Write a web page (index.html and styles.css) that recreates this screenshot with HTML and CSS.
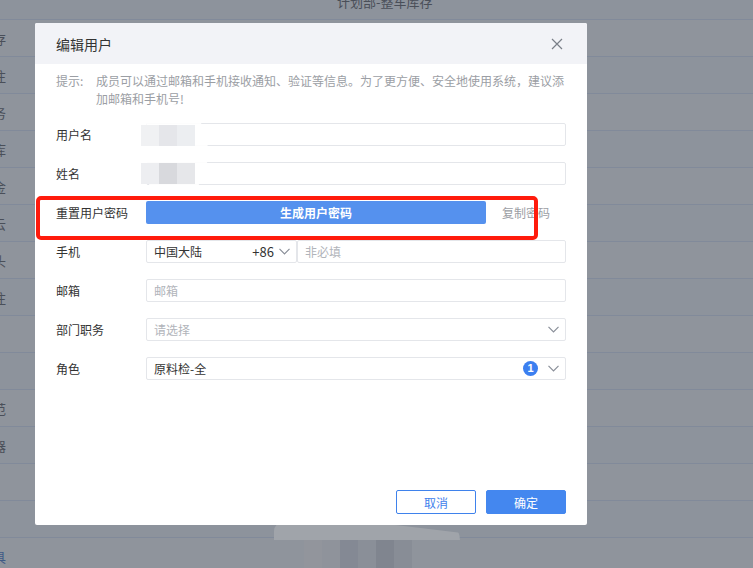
FILE: index.html
```html
<!DOCTYPE html>
<html lang="zh-CN">
<head>
    <meta charset="UTF-8">
    <meta name="viewport" content="width=device-width, initial-scale=1.0">
    <title>编辑用户</title>
    <link rel="stylesheet" href="styles.css">
</head>
<body>
<div class="bg-table">
    <div class="bg-row bg-head"><span class="bg-title">计划部-整车库存</span></div>
    <div class="bg-row"><span class="bg-cut">存</span></div>
    <div class="bg-row"><span class="bg-cut">注</span></div>
    <div class="bg-row"><span class="bg-cut">务</span></div>
    <div class="bg-row"><span class="bg-cut">库</span></div>
    <div class="bg-row"><span class="bg-cut">金</span></div>
    <div class="bg-row"><span class="bg-cut">云</span></div>
    <div class="bg-row"><span class="bg-cut">头</span></div>
    <div class="bg-row"><span class="bg-cut">注</span></div>
    <div class="bg-row"></div>
    <div class="bg-row"></div>
    <div class="bg-row"><span class="bg-cut">范</span></div>
    <div class="bg-row"><span class="bg-cut">器</span></div>
    <div class="bg-row"></div>
    <div class="bg-row"></div>
    <div class="bg-row"><span class="bg-cut bg-link">具</span></div>
</div>

<div class="blur-bottom"></div>
<div class="pix-bottom">
    <span class="px px-a"></span><span class="px px-b"></span><span class="px px-c"></span><span class="px px-d"></span><span class="px px-e"></span><span class="px px-f"></span>
</div>

<div class="modal">
    <div class="modal-header">
        <span class="modal-title">编辑用户</span>
        <svg class="close" width="12" height="12" viewBox="0 0 12 12">
            <path d="M1 1 L11 11 M11 1 L1 11" stroke="#7a7f88" stroke-width="1.2" fill="none"/>
        </svg>
    </div>
    <div class="modal-body">
        <div class="hint">
            <span class="hint-label">提示:</span>
            <span class="hint-text">成员可以通过邮箱和手机接收通知、验证等信息。为了更方便、安全地使用系统，建议添加邮箱和手机号!</span>
        </div>

        <div class="form-row">
            <label class="form-label">用户名</label>
            <div class="field"></div>
        </div>
        <div class="form-row">
            <label class="form-label">姓名</label>
            <div class="field"></div>
        </div>
        <div class="form-row">
            <label class="form-label">重置用户密码</label>
            <button class="btn-gen">生成用户密码</button>
            <span class="copy-link">复制密码</span>
        </div>
        <div class="form-row">
            <label class="form-label">手机</label>
            <div class="field-group">
                <div class="field country">
                    <span>中国大陆</span>
                    <span class="code">+86</span>
                    <svg class="chevron" width="11" height="7" viewBox="0 0 11 7"><path d="M0.5 0.8 L5.5 5.8 L10.5 0.8" stroke="#8a8f99" stroke-width="1.2" fill="none"/></svg>
                </div>
                <div class="field"><span class="placeholder">非必填</span></div>
            </div>
        </div>
        <div class="form-row">
            <label class="form-label">邮箱</label>
            <div class="field"><span class="placeholder">邮箱</span></div>
        </div>
        <div class="form-row">
            <label class="form-label">部门职务</label>
            <div class="field select">
                <span class="placeholder">请选择</span>
                <svg class="chevron" width="11" height="7" viewBox="0 0 11 7"><path d="M0.5 0.8 L5.5 5.8 L10.5 0.8" stroke="#8a8f99" stroke-width="1.2" fill="none"/></svg>
            </div>
        </div>
        <div class="form-row">
            <label class="form-label">角色</label>
            <div class="field select">
                <span>原料检-全</span>
                <span class="badge">1</span>
                <svg class="chevron" width="11" height="7" viewBox="0 0 11 7"><path d="M0.5 0.8 L5.5 5.8 L10.5 0.8" stroke="#8a8f99" stroke-width="1.2" fill="none"/></svg>
            </div>
        </div>
    </div>
    <div class="modal-footer">
        <button class="btn btn-outline">取消</button>
        <button class="btn btn-primary">确定</button>
    </div>
</div>

<!-- blurred name values -->
<div class="blur-blob"></div>
<div class="pix pix-user">
    <span class="px" style="background:#f0f1f3"></span><span class="px" style="background:#e5e6ea"></span><span class="px" style="background:#eceef1"></span>
</div>
<div class="pix pix-name">
    <span class="px" style="background:#edeef1"></span><span class="px" style="background:#d8d9dd"></span><span class="px" style="background:#e6e7ea"></span>
</div>

<div class="mark"></div>
</body>
</html>
```

FILE: styles.css
```css
body, html {
    margin: 0;
    padding: 0;
    height: 100%;
    overflow: hidden;
}
body {
    position: relative;
    width: 753px;
    height: 568px;
    background-color: #8f949c;
    font-family: "Noto Sans CJK SC", "Noto Sans", sans-serif;
}
.bg-table {
    width: 100%;
}
.bg-row {
    height: 36px;
    border-bottom: 1px solid #818a9a;
    display: flex;
    align-items: center;
    font-size: 13px;
    color: #4a4f59;
    overflow: hidden;
}
.bg-row:nth-child(odd) {
    background-color: #8d939c;
}
.bg-head {
    height: 19px;
    align-items: flex-start;
}
.bg-title {
    margin: -7px 0 0 337px;
    line-height: 18px;
}
.bg-cut {
    margin-left: -7px;
}
.bg-link {
    color: #3f5a86;
}
.modal {
    position: absolute;
    left: 35px;
    top: 23px;
    width: 552px;
    height: 502px;
    background-color: #ffffff;
    border-radius: 2px;
    display: flex;
    flex-direction: column;
    overflow: hidden;
}
.modal-header {
    height: 41px;
    background-color: #f2f3f7;
    display: flex;
    align-items: center;
    justify-content: space-between;
    padding: 0 24px 0 21px;
}
.modal-title {
    font-size: 14px;
    color: #333;
}
.modal-body {
    flex: 1;
    padding: 8px 21px 0;
}
.hint {
    display: flex;
    font-size: 12px;
    line-height: 18px;
    color: #9b9ea4;
    margin-bottom: 15px;
}
.hint-label {
    width: 40px;
    flex: none;
}
.hint-text {
    width: 470px;
}
.form-row {
    display: flex;
    align-items: center;
    height: 23px;
    margin-bottom: 16px;
}
.form-label {
    width: 90px;
    flex: none;
    font-size: 12px;
    color: #333;
}
.field {
    flex: 1;
    height: 23px;
    box-sizing: border-box;
    border: 1px solid #e4e6ea;
    border-radius: 2px;
    display: flex;
    align-items: center;
    padding: 0 6px 0 7px;
    font-size: 12px;
    color: #333;
}
.placeholder {
    color: #b1b4ba;
}
.field-group {
    flex: 1;
    display: flex;
}
.country {
    flex: none;
    width: 151px;
}
.code {
    margin-left: auto;
    font-size: 13px;
}
.country .chevron {
    margin-left: 5px;
}
.select .chevron {
    margin-left: auto;
}
.badge {
    margin-left: auto;
    width: 15px;
    height: 15px;
    border-radius: 50%;
    background-color: #3b7ff0;
    color: #fff;
    font-size: 11px;
    font-weight: bold;
    line-height: 15px;
    text-align: center;
    font-family: "Liberation Sans", sans-serif;
}
.badge + .chevron {
    margin-left: 10px;
}
.btn-gen {
    width: 340px;
    height: 23px;
    border: none;
    border-radius: 2px;
    background-color: #5591ee;
    color: #fff;
    font-family: inherit;
    font-size: 12px;
    font-weight: bold;
    padding: 0;
}
.copy-link {
    margin-left: 16px;
    font-size: 12px;
    color: #9b9ea4;
}
.modal-footer {
    display: flex;
    justify-content: flex-end;
    gap: 10px;
    padding: 0 21px 11px;
}
.btn {
    width: 80px;
    height: 24px;
    box-sizing: border-box;
    border-radius: 2px;
    font-family: inherit;
    font-size: 12px;
    padding: 0;
}
.btn-outline {
    background-color: #fff;
    border: 1px solid #3f82ec;
    color: #3f82ec;
}
.btn-primary {
    background-color: #4487ef;
    border: 1px solid #4487ef;
    color: #fff;
}
.mark {
    position: absolute;
    left: 36px;
    top: 196px;
    width: 502px;
    height: 44px;
    box-sizing: border-box;
    border: 4px solid #ff1b0c;
    border-radius: 5px;
}
.blur-blob {
    position: absolute;
    left: 140px;
    top: 104px;
    width: 68px;
    height: 96px;
    border-radius: 50%;
    background-color: rgba(255, 255, 255, 0.9);
}
.pix {
    position: absolute;
    left: 141px;
    display: flex;
}
.pix .px {
    width: 18px;
    height: 21px;
}
.pix-user {
    top: 125px;
}
.pix-name {
    top: 163px;
}
.blur-bottom {
    position: absolute;
    left: 274px;
    top: 522px;
    width: 186px;
    height: 18px;
    background-color: #a0a4aa;
    border-radius: 12px 24px 0 0;
    clip-path: polygon(0 0, 52% 0, 100% 60%, 100% 100%, 0 100%);
}
.pix-bottom {
    position: absolute;
    left: 304px;
    top: 540px;
    display: flex;
}
.pix-bottom .px {
    width: 18px;
    height: 28px;
}
.px-a { background-color: #92959c; }
.px-b { background-color: #8f939b; }
.px-c { background-color: #848994; }
.px-d { background-color: #8a8f98; }
.px-e { background-color: #80858f; }
.px-f { background-color: #888d96; }
```
